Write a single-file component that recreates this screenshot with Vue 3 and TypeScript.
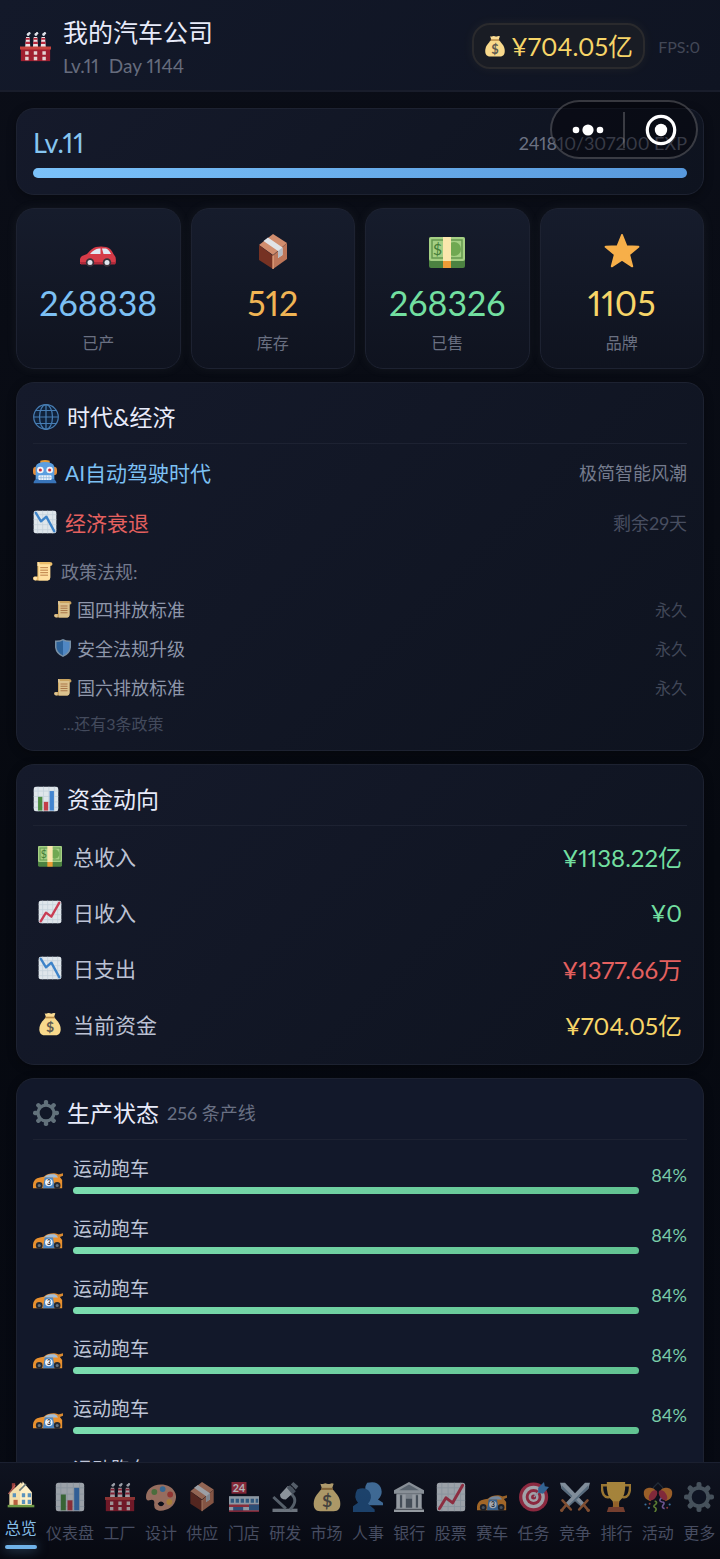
<script setup lang="ts">
interface Stat { icon: string; value: string; label: string; tone: string }
interface Flow { icon: string; label: string; value: string; tone: string }
interface Policy { icon: string; name: string; term: string }
interface Line { id: number; name: string; progress: number }
interface Tab { icon: string; label: string }

const stats: Stat[] = [
  { icon: 'car', value: '268838', label: '已产', tone: 'blue' },
  { icon: 'box', value: '512', label: '库存', tone: 'orange' },
  { icon: 'cash', value: '268326', label: '已售', tone: 'green' },
  { icon: 'star', value: '1105', label: '品牌', tone: 'yellow' },
]

const policies: Policy[] = [
  { icon: 'scroll', name: '国四排放标准', term: '永久' },
  { icon: 'shield', name: '安全法规升级', term: '永久' },
  { icon: 'scroll', name: '国六排放标准', term: '永久' },
]

const flows: Flow[] = [
  { icon: 'cash', label: '总收入', value: '¥1138.22亿', tone: 'green' },
  { icon: 'chart-up', label: '日收入', value: '¥0', tone: 'green' },
  { icon: 'chart-down', label: '日支出', value: '¥1377.66万', tone: 'red' },
  { icon: 'bag', label: '当前资金', value: '¥704.05亿', tone: 'yellow' },
]

const lines: Line[] = Array.from({ length: 6 }, (_, id) => ({ id, name: '运动跑车', progress: 84 }))

const tabs: Tab[] = [
  { icon: 'house', label: '总览' },
  { icon: 'bars', label: '仪表盘' },
  { icon: 'factory', label: '工厂' },
  { icon: 'palette', label: '设计' },
  { icon: 'box', label: '供应' },
  { icon: 'store', label: '门店' },
  { icon: 'microscope', label: '研发' },
  { icon: 'bag', label: '市场' },
  { icon: 'people', label: '人事' },
  { icon: 'bank', label: '银行' },
  { icon: 'chart-up', label: '股票' },
  { icon: 'racecar', label: '赛车' },
  { icon: 'target', label: '任务' },
  { icon: 'swords', label: '竞争' },
  { icon: 'trophy', label: '排行' },
  { icon: 'confetti', label: '活动' },
  { icon: 'gear', label: '更多' },
]
const activeTab = '总览'
</script>

<template>
  <div class="app">
    <svg class="sprite" aria-hidden="true">
      <symbol id="factory" viewBox="0 0 36 36">
        <g fill="#eee2e4"><path d="M6 19 7 7h4l1 12zM15 19l1-12h4l1 12zM24 19l1-12h4l1 12z" /></g>
        <g fill="#b5283c"><path d="M6.800 8h4.400l.2 2.300H6.600zM6.400 12.600h5.200l.2 2.400H6.200zM15.800 8h4.400l.2 2.300h-4.800zM15.400 12.600h5.200l.2 2.400h-5.600zM24.800 8h4.400l.2 2.300h-4.800zM24.400 12.600h5.200l.2 2.400h-5.600z" /></g>
        <g fill="#dfe3ea"><circle cx="9.500" cy="4" r="1.700" /><circle cx="18.500" cy="4" r="1.700" /><circle cx="27.500" cy="4" r="1.700" /><circle cx="10.800" cy="2.500" r="1.400" /><circle cx="19.800" cy="2.500" r="1.400" /><circle cx="28.800" cy="2.500" r="1.400" /></g>
        <path fill="#a01f30" d="M1 19h34v16H1z" />
        <path fill="#c8443f" d="M0 18h36v3.500H0z" />
        <path fill="#e3d3d3" d="M6 23.500h4v4H6zM16 23.500h4v4h-4zM26 23.500h4v4h-4zM6 30h4v4H6zM16 30h4v4h-4zM26 30h4v4h-4z" />
      </symbol>
      <symbol id="bag" viewBox="0 0 36 36">
        <path fill="#f8d98c" d="M12 8C6 14 2 19 2 26c0 5 2 9 8 9h16c6 0 8-4 8-9 0-7-4-12-10-18z" />
        <path fill="#fbdc93" d="M10 2q2 1 4 0 2-1 4 0t4 0q2-1 4 0l-2 6H12z" />
        <path fill="#b98b47" d="M11 7h14v2.500H11z" />
        <text x="18" y="30.500" text-anchor="middle" class="glyph bold" font-size="21" fill="#5f5b51">$</text>
      </symbol>
      <symbol id="car" viewBox="0 0 36 36">
        <path fill="#d63b48" d="M0 30q-1-6 2-8l5-2q5-6 9-7 5-1 10 0 5 1 7.500 7l2 3q1 5-.5 7H0z" />
        <path fill="#e0e9f3" d="M10 20q4-5 9-5.500h1.500V20zM22 14.500h4q3 1 5 5.500h-7.500z" />
        <path fill="#b02a3b" d="M0 28h36l-1 2.500H1z" />
        <g fill="#39333b"><circle cx="10" cy="28.500" r="4.200" /><circle cx="27" cy="28.500" r="4.200" /></g>
        <g fill="#dfe6ee"><circle cx="10" cy="28.500" r="2.500" /><circle cx="27" cy="28.500" r="2.500" /></g>
      </symbol>
      <symbol id="box" viewBox="0 1 36 36">
        <path fill="#d18d6e" d="M18 1 32 10 18 22 4 12z" />
        <path fill="#763223" d="m4 12 14 10.500V36L4 27z" />
        <path fill="#bd7659" d="m32 10-14 12.500V36l14-10z" />
        <path fill="#e0e3e7" d="m13 4.500 14.500 10v7.500l-4.500 3v-7L8.500 8z" />
        <path fill="#b6bcc4" d="m23 18 4.500-3.500V22L23 25z" />
        <path stroke="#e9a983" stroke-width="1.200" d="M18 22.500V36" />
      </symbol>
      <symbol id="cash" viewBox="0 0 36 36">
        <rect y="3" width="36" height="31" rx="2" fill="#4c8241" />
        <rect y="3" width="36" height="24" rx="2" fill="#a5cf84" />
        <rect x="3" y="6" width="30" height="18" fill="none" stroke="#65994f" stroke-width="1.500" />
        <circle cx="25" cy="15" r="7" fill="#70a852" />
        <text x="8.500" y="21" text-anchor="middle" class="glyph" font-size="16" fill="#437d38">$</text>
        <path fill="#fae6ad" d="M14 3h8v24h-8z" /><path fill="#ee9c37" d="M14 27h8v7h-8z" />
      </symbol>
      <symbol id="star" viewBox="0 0 36 36">
        <path fill="#f7af49" stroke="#f7af49" stroke-width="2" stroke-linejoin="round" d="m18 1 4.400 11.200 12 .6-9.300 7.700 3.100 11.800L18 25.700 7.800 32.300l3.100-11.800L1.600 12.800l12-.6z" />
      </symbol>
      <symbol id="globe" viewBox="0 0 36 36">
        <g fill="none" stroke="#477db3" stroke-width="1.700"><circle cx="18" cy="18" r="17" fill="#10223b" /><ellipse cx="18" cy="18" rx="9" ry="17" /><path d="M18 1v34M1 18h34M4 9h28M4 27h28" /></g>
      </symbol>
      <symbol id="robot" viewBox="0 0 36 36">
        <path fill="#e49b37" d="M11 1q7-2 14 0v5H11z" /><rect y="10" width="36" height="13" rx="5" fill="#e38c38" />
        <path fill="#5b9ee0" d="M4 10q2-7 14-7t14 7v19H4z" /><path fill="#3874b9" d="M1 33q2-5 6-5h22q4 0 6 5v2H1z" />
        <circle cx="11" cy="15" r="5" fill="#f4f4f6" /><circle cx="25" cy="15" r="5" fill="#f4f4f6" />
        <circle cx="11" cy="15" r="2.400" fill="#c93441" /><circle cx="25" cy="15" r="2.400" fill="#c93441" />
        <rect x="8" y="23" width="20" height="7" rx="2" fill="#eef4fb" /><path stroke="#8cb4dc" d="M12 23v7M16 23v7M20 23v7M24 23v7M8 26.500h20" />
      </symbol>
      <symbol id="grid" viewBox="0 0 36 36">
        <rect x="1" y="1" width="34" height="34" rx="3" fill="#dfe6eb" /><path stroke="#c5d3dc" stroke-width="1.200" d="M7 1v34M14.500 1v34M22 1v34M29.500 1v34M1 7h34M1 14.500h34M1 22h34M1 29.500h34" />
      </symbol>
      <symbol id="chart-down" viewBox="0 0 36 36">
        <use href="#grid" /><path fill="none" stroke="#3d83c9" stroke-width="3.500" stroke-linecap="round" stroke-linejoin="round" d="m4 4 8 13 8-7 12 22" />
      </symbol>
      <symbol id="chart-up" viewBox="0 0 36 36">
        <use href="#grid" /><path fill="none" stroke="#c93c53" stroke-width="3.500" stroke-linecap="round" stroke-linejoin="round" d="m4 32 8-13 8 6L32 4" />
      </symbol>
      <symbol id="bars" viewBox="0 0 36 36">
        <use href="#grid" /><path fill="#4c8c42" d="M7 15h6v19H7z" /><path fill="#c33e48" d="M15 22h6v12h-6z" /><path fill="#4384cf" d="M23 7h6v27h-6z" />
      </symbol>
      <symbol id="scroll" viewBox="0 0 36 36">
        <path fill="#ebbd6a" d="M8 2h22q5 0 5 4 0 3-4 3v20q0 6-5 6H5q-5 0-5-4 0-4 5-3h3z" />
        <path fill="#ffe0a0" d="M10 6h21v24q0 4-4 5H10z" /><path fill="#ffe3aa" d="M8 2q5 0 4 7H8zM1 31q0-4 6-2 1 5-3 6-3-1-3-4z" />
        <path stroke="#b97943" stroke-width="1.700" d="M13 12h14M13 16.500h14M13 21h14M13 25.500h14" />
      </symbol>
      <symbol id="shield" viewBox="0 0 36 36">
        <path fill="#8aa5bc" d="M18 0q8 4 16 3v14q-2 14-16 19Q4 31 2 17V3q8 1 16-3z" /><path fill="#5b9bdf" d="M18 3q6 3 13 3v11q-2 11-13 16z" /><path fill="#326fae" d="M18 3Q12 6 5 6v11q2 11 13 16z" />
      </symbol>
      <symbol id="gear" viewBox="0 0 36 36">
        <g fill="#62717b"><rect id="tooth" x="15" width="6" height="36" rx="2.500" /><use href="#tooth" transform="rotate(45 18 18)" /><use href="#tooth" transform="rotate(90 18 18)" /><use href="#tooth" transform="rotate(135 18 18)" /></g>
        <circle cx="18" cy="18" r="11" fill="#111727" stroke="#62717b" stroke-width="4.500" />
      </symbol>
      <symbol id="racecar" viewBox="0 0 36 36">
        <path fill="#e8902f" d="M0 34q-1-9 5-12 5-2 8-2 5-4 12-4 5 0 7 4l3 4v10z" />
        <path fill="#d88931" d="m28 18 8-2v3l-5 2z" /><path fill="#a1bdda" d="M13 21q4-4 8-4h5q3 1 4 4z" />
        <path fill="#4d88c6" d="M14 21h10l2 13H12z" /><circle cx="19" cy="27" r="4.500" fill="#eff3f8" />
        <text x="19" y="30" text-anchor="middle" class="glyph bold" font-size="8" fill="#243147">3</text>
        <g fill="#262a32"><circle cx="7.500" cy="30.500" r="4" /><circle cx="29" cy="30.500" r="4" /></g>
        <g fill="#66717d"><circle cx="7.500" cy="30.500" r="1.800" /><circle cx="29" cy="30.500" r="1.800" /></g>
      </symbol>
      <symbol id="house" viewBox="0 0 36 36">
        <path fill="#963d3b" d="M7 5h4v9H7z" /><path fill="#f4dfac" d="M4 17 18 4l6 10v18H4z" /><path fill="#fff0c7" d="m20 3 11 13v16H17V16z" />
        <path fill="none" stroke="#ba6158" stroke-width="1.500" d="m3 18 8-11" /><path fill="none" stroke="#687a7c" stroke-width="2" d="m16 14 8-8" />
        <g fill="#5b93bd"><path d="M8 17h4v5H8zM19 17h4v5h-4zM26 17h4v5h-4zM19 25h4v5h-4zM26 25h4v5h-4z" /></g>
        <path fill="#b85f3f" d="M9 25h5v7H9z" /><path fill="#6d9945" d="M2 31h32v3H2z" />
      </symbol>
      <symbol id="palette" viewBox="0 0 36 36">
        <path fill="#d89a80" fill-rule="evenodd" d="M18 3C7 3 0 10 0 18q0 5 4 4 6-2 6 3-1 6 2 8c5 3 12 1 17-2 7-5 9-14 5-20-3-5-9-8-16-8zm-4 23q4-5 8 0-4 6-8 0z" />
        <circle cx="10" cy="12" r="3.500" fill="#69994d" /><circle cx="20" cy="8.500" r="3.500" fill="#4c91ca" /><circle cx="29" cy="15" r="3.500" fill="#cf473f" /><circle cx="28" cy="24" r="3.500" fill="#efb349" />
      </symbol>
      <symbol id="store" viewBox="0 0 36 36">
        <path fill="#bd3345" d="M3 0h18v14H3z" /><text x="12" y="12" text-anchor="middle" class="glyph bold" font-size="13" fill="#fff">24</text>
        <path fill="#c9d9e4" d="M0 17h36v19H0z" /><path fill="#437daf" d="M2 20h4v5H2zM8 20h4v5H8zM14 20h4v5h-4zM20 20h4v5h-4zM26 20h4v5h-4zM32 20h3v5h-3z" />
        <path fill="#c43b49" d="M0 27h36v3H0z" /><path fill="#3d6da3" d="M5 30h12v5H5zM24 27h12v7H24z" /><path fill="#ae3144" d="M0 34h36v2H0z" />
      </symbol>
      <symbol id="microscope" viewBox="0 0 36 36">
        <path fill="#9ba5ae" d="M3 32h30v4H3z" /><path fill="none" stroke="#798690" stroke-width="3.500" d="m4 18 15 14M25 14q10 8-1 19" />
        <path fill="#c9d1d8" d="m12 15 9-10q8 0 8 7l-10 9q-7 0-7-6z" /><path fill="#76828d" d="m25 3 3-3 6 5-3 4z" /><path fill="#65717c" d="m20 7 4-3 7 7-4 4z" />
      </symbol>
      <symbol id="people" viewBox="0 0 36 36">
        <path fill="#5793cd" d="M17 1q12-3 16 5 4 8-3 15l6 4v3H16V12q-3-5 1-11z" /><path fill="#255a91" d="M5 9q10-4 15 3 4 7-2 14l8 7v3H0v-7l6-4Q0 18 5 9z" />
      </symbol>
      <symbol id="bank" viewBox="0 0 36 36">
        <path fill="#c3cbd1" d="m18 0 18 10v4H0V10z" /><path fill="#7e8b95" d="m18 3 12 7H6z" />
        <path fill="#aeb8bf" d="M3 14h30v18H3z" /><path fill="#616d77" d="M7 16h3v15H7zM14 20h8v12h-8zM26 16h3v15h-3z" />
        <path fill="#d5dce1" d="M3 15h4v16H3zM10 15h4v16h-4zM22 15h4v16h-4zM29 15h4v16h-4zM0 33h36v3H0zM2 31h32v1H2z" />
      </symbol>
      <symbol id="target" viewBox="0 0 36 36">
        <circle cx="17.500" cy="18" r="17.500" fill="#c83551" /><circle cx="17.500" cy="18" r="13.500" fill="#e8e6eb" /><circle cx="17.500" cy="18" r="9.500" fill="#c83551" /><circle cx="17.500" cy="18" r="6" fill="#e8e6eb" /><circle cx="17.500" cy="18" r="3" fill="#c83551" />
        <path stroke="#c5d6e5" stroke-width="1.500" d="m18 18 10-11" /><path fill="#468bca" d="m23 7 7-7 1 5 5 1-7 8-6-1z" />
      </symbol>
      <symbol id="swords" viewBox="0 0 36 36">
        <g id="sword"><path fill="#b7c8d6" d="M0 1h6l24 25-4 4L2 8z" /><path fill="#7894a9" d="m2 4 25 25-1 1L2 8z" /><path stroke="#b76d3e" stroke-width="3" stroke-linecap="round" d="m23 33 10-11M29 28l5 6" /><circle cx="34" cy="34" r="2" fill="#b76d3e" /></g>
        <use href="#sword" transform="matrix(-1 0 0 1 36 0)" />
      </symbol>
      <symbol id="trophy" viewBox="0 0 36 36">
        <path fill="none" stroke="#dba63d" stroke-width="3" stroke-linecap="round" d="M8 4H1q0 16 9 14M28 4h7q0 16-9 14" /><path fill="#edba4b" d="M7 0h22q1 18-7 23l-1 7h-6l-1-7Q6 18 7 0z" />
        <path fill="#d48b32" d="M15 23h6l1 8h-8z" /><path fill="#a8573a" d="M9 30h18l2 6H7z" />
      </symbol>
      <symbol id="confetti" viewBox="0 0 36 36">
        <path fill="none" stroke="#2d3946" stroke-width="1.500" d="m12 7 6-6 6 6" />
        <path fill="#dc842f" d="M1 15Q0 8 7 7q6-1 8 3l-6 13q-7-2-8-8zM35 15q1-7-6-8-6-1-8 3l6 13q7-2 8-8z" />
        <ellipse cx="12" cy="16" rx="4" ry="7" fill="#b7354a" transform="rotate(35 12 16)" /><ellipse cx="24" cy="16" rx="4" ry="7" fill="#b7354a" transform="rotate(-35 24 16)" />
        <path fill="none" stroke="#80ad3e" stroke-width="2" d="M14 23q4 1 1 4-4 2 0 4 2 2-1 5" /><path fill="none" stroke="#9a75c7" stroke-width="2" d="M22 19q-4 4 1 5 4 0 1 4-2 3 2 4" />
        <g fill="#519ed6"><circle cx="3" cy="27" r="1.300" /><circle cx="7" cy="31" r="1.300" /><circle cx="32" cy="27" r="1.300" /></g><g fill="#c8504f"><circle cx="8" cy="26" r="1.200" /><circle cx="29" cy="31" r="1.200" /></g>
      </symbol>
    </svg>

    <header class="top">
      <svg class="logo"><use href="#factory" /></svg>
      <div class="company">
        <h1>我的汽车公司</h1>
        <p><span>Lv.11</span><span>Day 1144</span></p>
      </div>
      <div class="wallet"><svg class="purse"><use href="#bag" /></svg><span>¥704.05亿</span></div>
      <span class="fps">FPS:0</span>
    </header>

    <div class="capsule">
      <button type="button" aria-label="更多操作">
        <svg width="34" height="20" viewBox="0 0 34 20" fill="#fff"><circle cx="5" cy="10" r="3.300" /><circle cx="17" cy="10" r="5.600" /><circle cx="29" cy="10" r="3.300" /></svg>
      </button>
      <i></i>
      <button type="button" aria-label="关闭">
        <svg width="32" height="32" viewBox="0 0 32 32"><circle cx="16" cy="16" r="13.700" fill="none" stroke="#fff" stroke-width="3.200" /><circle cx="16" cy="16" r="6.200" fill="#fff" /></svg>
      </button>
    </div>

    <main>
      <section class="card level">
        <div class="level-row"><strong>Lv.11</strong><span>241810/307200 EXP</span></div>
        <div class="bar exp"></div>
      </section>

      <section class="stats">
        <article v-for="s in stats" :key="s.label" class="stat">
          <svg class="i36"><use :href="'#' + s.icon" /></svg>
          <b :class="s.tone">{{ s.value }}</b>
          <span>{{ s.label }}</span>
        </article>
      </section>

      <section class="card">
        <h2><svg class="i26"><use href="#globe" /></svg>时代&amp;经济</h2>
        <div class="era"><svg class="i24"><use href="#robot" /></svg><span class="blue">AI自动驾驶时代</span><em>极简智能风潮</em></div>
        <div class="era"><svg class="i24"><use href="#chart-down" /></svg><span class="red">经济衰退</span><em class="faint">剩余29天</em></div>
        <div class="policy-title"><svg class="i20"><use href="#scroll" /></svg>政策法规:</div>
        <ul class="policies">
          <li v-for="p in policies" :key="p.name"><svg class="i18"><use :href="'#' + p.icon" /></svg><span>{{ p.name }}</span><em>{{ p.term }}</em></li>
        </ul>
        <p class="rest">...还有3条政策</p>
      </section>

      <section class="card">
        <h2><svg class="i26"><use href="#bars" /></svg>资金动向</h2>
        <ul class="flows">
          <li v-for="f in flows" :key="f.label"><svg class="i24"><use :href="'#' + f.icon" /></svg><span>{{ f.label }}</span><b :class="f.tone">{{ f.value }}</b></li>
        </ul>
      </section>

      <section class="card">
        <h2><svg class="i26"><use href="#gear" /></svg>生产状态<small>256 条产线</small></h2>
        <ul class="lines">
          <li v-for="l in lines" :key="l.id">
            <svg class="i30"><use href="#racecar" /></svg>
            <div class="line-body"><span>{{ l.name }}</span><div class="bar prod"></div></div>
            <b>{{ l.progress }}%</b>
          </li>
        </ul>
      </section>
    </main>

    <nav>
      <button v-for="t in tabs" :key="t.label" type="button" :class="{ active: t.label === activeTab }">
        <svg class="i30"><use :href="'#' + t.icon" /></svg>
        <span>{{ t.label }}</span>
      </button>
    </nav>
  </div>
</template>

<style>
body { background: #080b14; }
</style>

<style scoped>
.app {
  position: relative;
  display: flex;
  flex-direction: column;
  height: 100vh;
  overflow: hidden;
  background: linear-gradient(180deg, #0b0e18 0%, #060910 55%, #070a13 100%);
  color: #e8ebfa;
  font-family: Lato, "Noto Sans CJK SC", sans-serif;
  font-weight: 400;
  font-variant-numeric: proportional-nums;
}
.app * { box-sizing: border-box; }
h1, h2, p, ul { margin: 0; padding: 0; font-weight: 400; }
ul { list-style: none; }
b, strong { font-weight: 400; }
em { font-style: normal; }
svg { flex: none; display: block; }
.sprite { position: absolute; width: 0; height: 0; overflow: hidden; }
.glyph { font-family: Lato, sans-serif; }
.bold { font-weight: 700; }
.i18 { width: 18px; height: 18px; }
.i20 { width: 20px; height: 20px; }
.i24 { width: 24px; height: 24px; }
.i26 { width: 26px; height: 26px; }
.i30 { width: 30px; height: 30px; }
.i36 { width: 36px; height: 36px; }

.blue { color: #7cc0f4; }
.orange { color: #f0b454; }
.green { color: #72dfa0; }
.yellow { color: #f7d568; }
.red { color: #e4605f; }

.top {
  display: flex;
  align-items: center;
  height: 92px;
  flex: none;
  padding: 2px 20px 0;
  background: linear-gradient(135deg, #13192a, #0f1422);
  border-bottom: 2px solid #191d2b;
}
.logo { width: 31px; height: 33px; }
.company { flex: 1; margin-left: 12px; }
.company h1 { font-size: 25px; line-height: 34px; }
.company p { display: flex; gap: 10px; margin-top: 5px; font-size: 19px; line-height: 24px; color: #666c7d; }
.wallet {
  display: flex;
  align-items: center;
  gap: 5px;
  height: 46px;
  padding: 0 10px;
  border: 2px solid #2a2a2d;
  border-radius: 18px;
  background: #191c24;
  box-shadow: 0 0 12px rgba(247, 213, 104, 0.06);
  font-size: 25px;
  line-height: 42px;
  color: #f7d568;
}
.purse { width: 22px; height: 22px; }
.fps { margin-left: 13px; font-size: 16px; color: #424756; }

.capsule {
  position: absolute;
  top: 100px;
  right: 22px;
  display: flex;
  align-items: center;
  width: 148px;
  height: 59px;
  border: 2px solid rgba(255, 255, 255, 0.2);
  border-radius: 30px;
  background: rgba(3, 4, 10, 0.5);
}
.capsule button { flex: 1; display: flex; justify-content: center; padding: 0; border: 0; background: none; }
.capsule i { width: 2px; height: 36px; background: rgba(255, 255, 255, 0.2); }

main {
  flex: 1;
  min-height: 0;
  display: flex;
  flex-direction: column;
  gap: 13px;
  padding: 16px 16px 0;
  overflow: hidden;
}
.card, .stat {
  flex: none;
  border: 1px solid #1d2231;
  border-radius: 18px;
  box-shadow: 0 2px 10px rgba(0, 0, 0, 0.3);
}
.card { padding: 16px; background: linear-gradient(135deg, #151a2b, #0e131f); }
.card:last-child { background: #12182a; }

.level-row { display: flex; align-items: center; justify-content: space-between; line-height: 36px; margin-bottom: 7px; }
.level-row strong { font-size: 27px; color: #86c5f0; }
.level-row span { font-size: 18px; color: #6b7182; }
.bar { border-radius: 5px; }
.exp { height: 10px; background: linear-gradient(90deg, #7bc2fa, #5798dc); }

.stats { flex: none; display: grid; grid-template-columns: repeat(4, 1fr); gap: 10px; }
.stat {
  display: flex;
  flex-direction: column;
  align-items: center;
  padding: 25px 0 15px;
  background: linear-gradient(180deg, #161c2c, #0f131f);
  box-shadow: 0 0 12px rgba(160, 170, 150, 0.07);
}
.stat b { margin: 11px 0 8px; font-size: 34px; line-height: 44px; }
.stat span { font-size: 16px; line-height: 20px; color: #6a7081; }

h2 {
  display: flex;
  align-items: center;
  padding-bottom: 8px;
  border-bottom: 1px solid #1d2232;
  font-size: 23px;
  line-height: 36px;
}
h2 svg { margin-right: 8px; }
h2 small { margin-left: 8px; font-size: 18px; color: #697083; }

.era { display: flex; align-items: center; height: 50px; font-size: 21px; }
h2 + .era { margin-top: 3px; }
.era svg { margin-right: 8px; }
.era em { margin-left: auto; font-size: 18px; color: #747b8d; }
.era .faint { color: #484e60; }
.policy-title { display: flex; align-items: center; gap: 8px; height: 36px; margin-top: 6px; font-size: 18px; color: #737a8d; }
.policies { padding-left: 21px; }
.policies li { display: flex; align-items: center; height: 39px; gap: 5px; font-size: 18px; color: #8e96aa; }
.policies svg { opacity: 0.85; }
.policies em { margin-left: auto; font-size: 16px; color: #424859; }
.rest { margin: 8px 0 0 30px; font-size: 16px; line-height: 20px; color: #434a5c; }

.flows { display: grid; gap: 12px; padding: 8px 5px 2px; }
.flows li { display: flex; align-items: center; height: 44px; font-size: 21px; color: #bbc1d3; }
.flows svg { margin-right: 11px; }
.flows b { margin-left: auto; font-size: 24px; }

.lines { display: grid; gap: 21px; padding-top: 15px; }
.lines li { display: flex; align-items: center; }
.line-body { flex: 1; margin: 0 12px 0 10px; font-size: 19px; line-height: 27px; color: #bfc5d7; }
.line-body span { display: block; margin-bottom: 5px; }
.prod { height: 7px; background: linear-gradient(90deg, #7bdcaf, #62c392); }
.lines b { width: 36px; font-size: 18px; text-align: right; white-space: nowrap; color: #79cca9; }

nav {
  position: relative;
  flex: none;
  display: flex;
  height: 97px;
  border-top: 1px solid #1b2030;
  background: linear-gradient(180deg, #0f1320, #070911);
}
nav button {
  flex: 1 1 auto;
  display: flex;
  flex-direction: column;
  align-items: center;
  padding: 19px 0 0;
  border: 0;
  background: none;
  font: inherit;
  font-size: 16px;
  line-height: 20px;
  color: #474d61;
}
nav svg { opacity: 0.68; }
nav span { margin-top: 11px; white-space: nowrap; }
nav .active { padding-top: 16px; color: #85bee6; }
nav .active svg { opacity: 1; }
nav .active span { margin-top: 9px; }
nav .active::after {
  content: "";
  width: 32px;
  height: 4px;
  margin-top: 7px;
  border-radius: 2px;
  background: #6fb2e8;
  box-shadow: 0 0 12px rgba(111, 178, 232, 0.6);
}
</style>
